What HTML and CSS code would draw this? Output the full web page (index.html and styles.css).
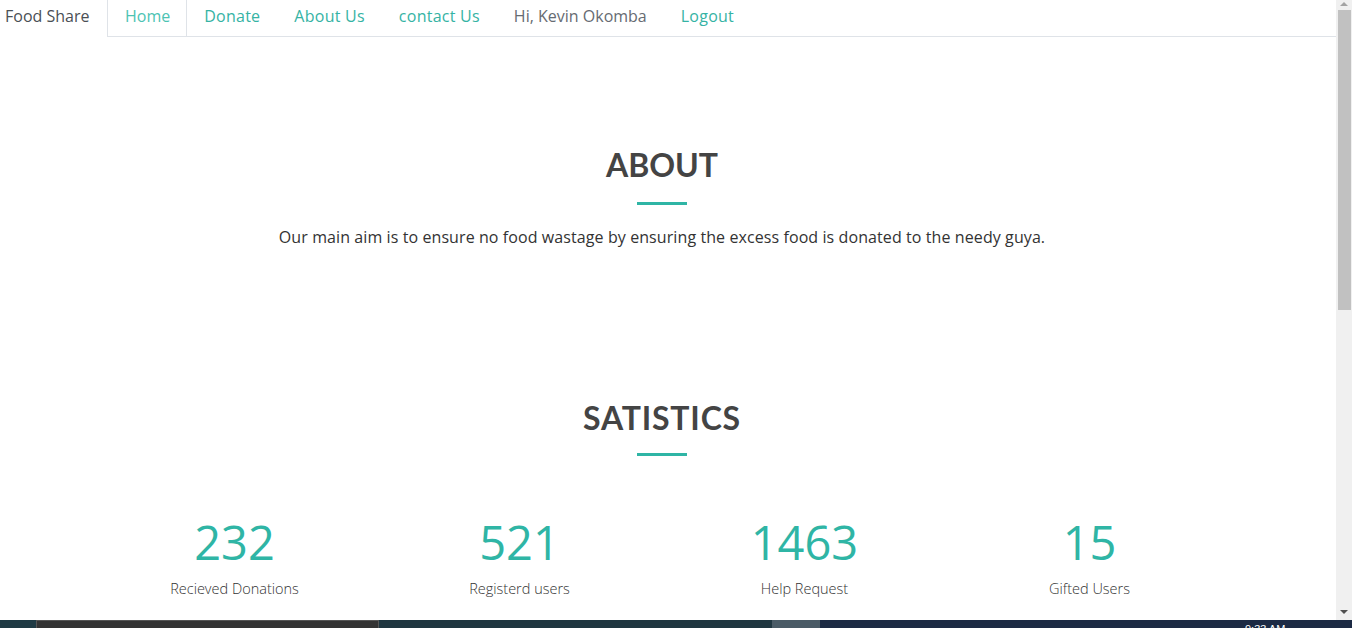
FILE: index.html
```html
<!DOCTYPE html>
<html lang="en">
<head>
<meta charset="utf-8">
<title>Food Share</title>
<link rel="stylesheet" href="styles.css">
</head>
<body>
<div class="screen">
  <div class="window">
    <div class="page">
      <nav class="navbar">
        <a class="brand" href="#">Food Share</a>
        <ul class="nav">
          <li class="nav-item active"><a href="#">Home</a></li>
          <li class="nav-item"><a href="#">Donate</a></li>
          <li class="nav-item"><a href="#">About Us</a></li>
          <li class="nav-item"><a href="#">contact Us</a></li>
          <li class="nav-item user"><span>Hi, Kevin Okomba</span></li>
          <li class="nav-item"><a href="#">Logout</a></li>
        </ul>
      </nav>
      <section class="about">
        <h2 class="section-title">ABOUT</h2>
        <div class="title-bar"></div>
        <p class="lead">Our main aim is to ensure no food wastage by ensuring the excess food is donated to the needy guya.</p>
      </section>
      <section class="stats">
        <h2 class="section-title wide">SATISTICS</h2>
        <div class="title-bar"></div>
        <div class="stat-row">
          <div class="stat"><div class="stat-num">232</div><div class="stat-label">Recieved Donations</div></div>
          <div class="stat"><div class="stat-num">521</div><div class="stat-label">Registerd users</div></div>
          <div class="stat"><div class="stat-num">1463</div><div class="stat-label">Help Request</div></div>
          <div class="stat"><div class="stat-num">15</div><div class="stat-label">Gifted Users</div></div>
        </div>
      </section>
    </div>
    <div class="scrollbar">
      <div class="sb-arrow up"></div>
      <div class="sb-thumb"></div>
      <div class="sb-space"></div>
      <div class="sb-arrow down"></div>
    </div>
  </div>
  <div class="taskbar">
    <div class="tb-start"></div>
    <div class="tb-app"></div>
    <div class="tb-gap"></div>
    <div class="tb-hl"></div>
    <div class="tb-fill"><span class="tb-clock">9:33 AM</span></div>
  </div>
</div>
</body>
</html>
```
FILE: styles.css
```css
* { box-sizing: border-box; }
html, body { margin: 0; padding: 0; }
body {
  font-family: "Open Sans", "Liberation Sans", sans-serif;
  color: #333;
  background: #fff;
  overflow: hidden;
}
.screen {
  width: 1352px;
  height: 628px;
  display: flex;
  flex-direction: column;
}
.window {
  height: 620px;
  display: flex;
}
.page {
  flex: 1;
  overflow: hidden;
  padding-right: 12px;
}
.navbar {
  display: flex;
  height: 37px;
  margin-right: -12px;
}
.brand {
  display: block;
  width: 108px;
  padding-left: 5px;
  border-right: 1px solid #dfe3e8;
  font-size: 16px;
  line-height: 32px;
  color: #4a4f55;
  text-decoration: none;
}
.nav {
  flex: 1;
  display: flex;
  list-style: none;
  margin: 0;
  padding: 0;
  border-bottom: 1px solid #dfe3e8;
}
.nav-item {
  padding: 0 17px;
  font-size: 16px;
  line-height: 32px;
  letter-spacing: 0.25px;
}
.nav-item a { color: #35b3a4; text-decoration: none; }
.nav-item.active { border-right: 1px solid #dfe3e8; padding-right: 16px; letter-spacing: 0; }
.nav-item.active a { color: #4cc3b3; }
.nav-item.user { color: #666b72; letter-spacing: 0; padding-left: 17px; }

.section-title {
  margin: 0;
  text-align: center;
  font-family: "Lato", "Liberation Sans", sans-serif;
  font-weight: 700;
  font-size: 32px;
  line-height: 35px;
  color: #444;
}
.section-title.wide { letter-spacing: 0.8px; }
.title-bar {
  width: 50px;
  height: 3px;
  background: #2fb5a5;
  margin: 0 auto;
}
.about { padding-top: 110px; }
.about .title-bar { margin-top: 20px; }
.lead {
  margin: 20px 0 0;
  text-align: center;
  font-size: 16px;
  line-height: 24px;
  letter-spacing: 0.09px;
  color: #333;
}
.stats { padding-top: 151px; }
.stats .title-bar { margin-top: 18px; }
.stat-row {
  display: flex;
  width: 1140px;
  margin: 60px auto 0;
}
.stat {
  flex: 1;
  text-align: center;
}
.stat-num {
  font-size: 47px;
  line-height: 52px;
  color: #2fb5a5;
}
.stat-label {
  margin-top: 11px;
  font-size: 14.5px;
  line-height: 20px;
  color: #333;
  font-weight: 300;
}

.scrollbar {
  width: 16px;
  background: #f0f0f0;
  display: flex;
  flex-direction: column;
  align-items: center;
}
.sb-arrow { width: 0; height: 0; border-left: 4px solid transparent; border-right: 4px solid transparent; }
.sb-arrow.up { border-bottom: 4px solid #a3a3a3; margin-top: 2px; }
.sb-arrow.down { border-top: 4px solid #505050; margin-bottom: 6px; }
.sb-thumb {
  width: 13px;
  margin-left: 1px;
  height: 300px;
  margin-top: 4px;
  background: #c1c1c1;
}
.sb-space { flex: 1; }

.taskbar {
  height: 8px;
  display: flex;
  background: #1c2a44;
}
.tb-start { width: 36px; background: #1f3a44; }
.tb-app { width: 343px; background: #333; border-top: 1px solid #555; border-left: 1px solid #555; border-right: 1px solid #555; }
.tb-gap { width: 393px; background: #1f3640; }
.tb-hl { width: 48px; background: #4a5b66; }
.tb-fill { flex: 1; background: #1c2a44; position: relative; overflow: hidden; }
.tb-clock {
  position: absolute;
  left: 425px;
  top: 3px;
  font-size: 11px;
  line-height: 12px;
  color: #fff;
  font-family: "Liberation Sans", sans-serif;
}
```
